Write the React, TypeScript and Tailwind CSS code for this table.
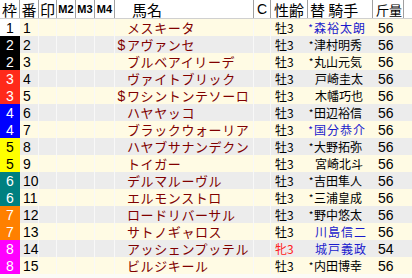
const WAKU: Record<number, string> = {
  1: "bg-white text-black",
  2: "bg-black text-white",
  3: "bg-[#ff2a1a] text-white",
  4: "bg-[#0000ff] text-white",
  5: "bg-[#ffff00] text-black",
  6: "bg-[#008080] text-white",
  7: "bg-[#ff8000] text-white",
  8: "bg-[#ff00ff] text-white",
};

type Row = {
  waku: number;
  ban: number;
  mark?: string;
  name: string;
  sex: string;
  mare?: boolean;
  jockey: string;
  star?: boolean;
  blue?: boolean;
  kin: string;
};

const rows: Row[] = [
  { waku: 1, ban: 1, name: "メスキータ", sex: "牡3", jockey: "森裕太朗", star: true, blue: true, kin: "56" },
  { waku: 2, ban: 2, mark: "$", name: "アヴァンセ", sex: "牡3", jockey: "津村明秀", star: true, kin: "56" },
  { waku: 2, ban: 3, name: "ブルベアイリーデ", sex: "牡3", jockey: "丸山元気", star: true, kin: "56" },
  { waku: 3, ban: 4, name: "ヴァイトブリック", sex: "牡3", jockey: "戸崎圭太", kin: "56" },
  { waku: 3, ban: 5, mark: "$", name: "ワシントンテソーロ", sex: "牡3", jockey: "木幡巧也", kin: "56" },
  { waku: 4, ban: 6, name: "ハヤヤッコ", sex: "牡3", jockey: "田辺裕信", star: true, kin: "56" },
  { waku: 4, ban: 7, name: "ブラックウォーリア", sex: "牡3", jockey: "国分恭介", star: true, blue: true, kin: "56" },
  { waku: 5, ban: 8, name: "ハヤブサナンデクン", sex: "牡3", jockey: "大野拓弥", star: true, kin: "56" },
  { waku: 5, ban: 9, name: "トイガー", sex: "牡3", jockey: "宮崎北斗", kin: "56" },
  { waku: 6, ban: 10, name: "デルマルーヴル", sex: "牡3", jockey: "吉田隼人", star: true, kin: "56" },
  { waku: 6, ban: 11, name: "エルモンストロ", sex: "牡3", jockey: "三浦皇成", star: true, kin: "56" },
  { waku: 7, ban: 12, name: "ロードリバーサル", sex: "牡3", jockey: "野中悠太", star: true, kin: "56" },
  { waku: 7, ban: 13, name: "サトノギャロス", sex: "牡3", jockey: "川島信二", blue: true, kin: "56" },
  { waku: 8, ban: 14, name: "アッシェンプッテル", sex: "牝3", mare: true, jockey: "城戸義政", blue: true, kin: "54" },
  { waku: 8, ban: 15, name: "ビルジキール", sex: "牡3", jockey: "内田博幸", star: true, kin: "56" },
];

const digits = { fontFamily: '"Liberation Sans", Arial, sans-serif' };

const HeadCell = ({ w, children }: { w: string; children?: React.ReactNode }) => (
  <div className={`${w} h-full flex items-center justify-center border-r border-[#a0a0a0] shrink-0 overflow-hidden`}>
    {children}
  </div>
);

const EntryRow = ({ r, even }: { r: Row; even: boolean }) => (
  <div className={`flex h-[17px] leading-none whitespace-nowrap ${even ? "bg-[#ececec]" : "bg-[#fffbe4]"}`}>
    <div
      className={`w-[20px] shrink-0 flex items-center justify-center text-[14px] ${WAKU[r.waku]}`}
      style={digits}
    >
      {r.waku}
    </div>
    <div
      className="w-[19px] shrink-0 flex items-center pl-[3px] text-[14px] border-r border-[#f8f8f8]"
      style={digits}
    >
      {r.ban}
    </div>
    <div className="w-[18px] shrink-0 border-r border-[#f8f8f8]" />
    <div className="w-[19px] shrink-0 border-r border-[#f8f8f8]" />
    <div className="w-[19px] shrink-0 border-r border-[#f8f8f8]" />
    <div className="w-[20px] shrink-0 border-r border-[#f8f8f8]" />
    <div className="w-[139px] shrink-0 flex items-center overflow-hidden text-[13px] text-[#800000] tracking-[0.6px] border-r border-[#f8f8f8]">
      <span className="w-[12px] shrink-0 text-right pr-[1px] text-[14px]" style={digits}>
        {r.mark}
      </span>
      <span>{r.name}</span>
    </div>
    <div className="w-[17px] shrink-0 border-r border-[#f8f8f8]" />
    <div className={`w-[37px] shrink-0 flex items-center pl-[4px] text-[12px] ${r.mare ? "text-[#ff2020]" : "text-black"}`}>
      {r.sex}
    </div>
    <div
      className={`w-[65px] shrink-0 flex items-center overflow-hidden text-[12px] ${r.blue ? "text-[#1a1acc] tracking-[1px]" : "text-black"}`}
    >
      {r.star ? (
        <span className="w-[6px] text-[10px] text-center shrink-0">*</span>
      ) : (
        <span className="w-[7px] shrink-0" />
      )}
      <span>{r.jockey}</span>
    </div>
    <div className="w-[31px] shrink-0 flex items-center pl-[5px] text-[14px] text-black" style={digits}>
      {r.kin}
    </div>
    <div className="flex-1" />
  </div>
);

export default function App() {
  return (
    <div
      className="w-[412px] h-[278px] bg-[#fbfbf6] overflow-hidden text-black"
      style={{ fontFamily: '"Noto Sans CJK JP", "DejaVu Sans", sans-serif' }}
    >
      <div className="flex h-[19px] bg-white text-[15px] leading-none whitespace-nowrap border-b border-[#d0d0d0]">
        <HeadCell w="w-[20px]">枠</HeadCell>
        <HeadCell w="w-[19px]">番</HeadCell>
        <HeadCell w="w-[18px]">印</HeadCell>
        <HeadCell w="w-[19px]"><span className="text-[11px] font-bold" style={digits}>M2</span></HeadCell>
        <HeadCell w="w-[19px]"><span className="text-[11px] font-bold" style={digits}>M3</span></HeadCell>
        <HeadCell w="w-[20px]"><span className="text-[11px] font-bold" style={digits}>M4</span></HeadCell>
        <div className="w-[139px] shrink-0 h-full flex items-center pl-[17px] border-r border-[#a0a0a0]">馬名</div>
        <HeadCell w="w-[17px]"><span className="text-[14px]" style={digits}>C</span></HeadCell>
        <HeadCell w="w-[37px]">性齢</HeadCell>
        <div className="w-[65px] shrink-0 h-full flex items-center pl-[2px] border-r border-[#a0a0a0]">替&nbsp;騎手</div>
        <div className="w-[31px] shrink-0 h-full flex items-center pl-[3px] text-[13px] border-r border-[#a0a0a0]">斤量</div>
        <div className="flex-1" />
      </div>
      {rows.map((r, i) => (
        <EntryRow key={r.ban} r={r} even={i % 2 === 1} />
      ))}
    </div>
  );
}
